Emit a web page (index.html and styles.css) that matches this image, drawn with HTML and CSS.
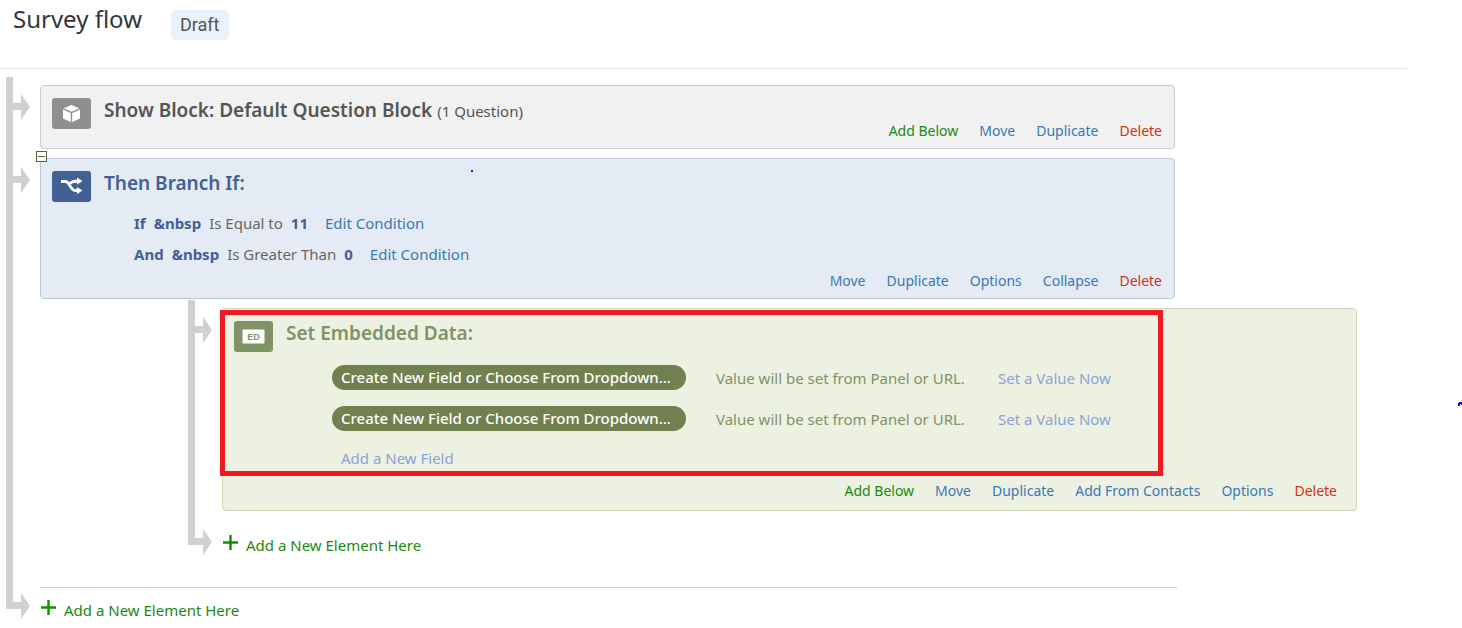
FILE: index.html
```html
<!DOCTYPE html>
<html lang="en">
<head>
<meta charset="utf-8">
<title>Survey flow</title>
<link rel="stylesheet" href="styles.css">
</head>
<body>
<svg class="defs" aria-hidden="true">
  <symbol id="arrow" viewBox="0 0 17 26"><path d="M0 9h8V0l9 13-9 13v-10H0z"/></symbol>
  <symbol id="plus" viewBox="0 0 15 15"><path d="M6.300 0h2.400v6.300H15v2.400H8.700V15H6.300V8.700H0V6.300h6.300z"/></symbol>
</svg>
<header class="page-header">
  <h1 class="page-title">Survey flow</h1>
  <span class="badge">Draft</span>
</header>
<main class="flow">
  <ul class="tree">
    <li class="node">
      <div class="rail"><svg class="arrow"><use href="#arrow"/></svg></div>
      <div class="content">
        <section class="card card-block">
          <svg class="card-icon" viewBox="0 0 39 31">
            <path fill="#fff" d="M19.500 7l7.800 3.200-7.800 3.600-7.800-3.600z M11 11.500l7.800 3.600v9L11 20.500z M28 11.500l-7.800 3.600v9l7.800-3.600z"/>
          </svg>
          <h2 class="card-title">Show Block: Default Question Block <span class="count">(1 Question)</span></h2>
          <nav class="actions">
            <a class="add" href="#">Add Below</a><a href="#">Move</a><a href="#">Duplicate</a><a class="delete" href="#">Delete</a>
          </nav>
        </section>
      </div>
    </li>
    <li class="node">
      <div class="rail"><svg class="arrow"><use href="#arrow"/></svg></div>
      <div class="content">
        <section class="card card-branch">
          <svg class="card-icon" viewBox="0 0 39 31">
            <path fill="none" stroke="#fff" stroke-width="2.800" d="M9 10.500h4.500c4 0 5 9 9.500 9h4M18 12.500c1.500-2 3-2.500 9-2.500"/>
            <path fill="#fff" d="M25 6.500l5.500 3.500-5.500 3.500zM25 16l5.500 3.500-5.500 3.500z"/>
          </svg>
          <h2 class="card-title">Then Branch If:</h2>
          <div class="conditions">
            <p class="condition"><b>If</b><b>&amp;nbsp</b><span>Is Equal to</span><b>11</b><a href="#">Edit Condition</a></p>
            <p class="condition"><b>And</b><b>&amp;nbsp</b><span>Is Greater Than</span><b>0</b><a href="#">Edit Condition</a></p>
          </div>
          <nav class="actions">
            <a href="#">Move</a><a href="#">Duplicate</a><a href="#">Options</a><a href="#">Collapse</a><a class="delete" href="#">Delete</a>
          </nav>
          <i class="speck"></i>
          <button class="toggle" type="button" aria-label="Collapse branch"></button>
        </section>
        <ul class="tree tree-nested">
          <li class="node">
            <div class="rail"><svg class="arrow"><use href="#arrow"/></svg></div>
            <div class="content">
              <section class="card card-data">
                <svg class="card-icon" viewBox="0 0 39 31">
                  <rect x="8.500" y="8.500" width="22" height="14" rx="1" fill="#fff"/>
                  <text class="icon-text" x="19.500" y="19" text-anchor="middle">ED</text>
                </svg>
                <h2 class="card-title">Set Embedded Data:</h2>
                <div class="fields">
                  <div class="field"><button class="pill" type="button">Create New Field or Choose From Dropdown...</button><span>Value will be set from Panel or URL.</span><a href="#">Set a Value Now</a></div>
                  <div class="field"><button class="pill" type="button">Create New Field or Choose From Dropdown...</button><span>Value will be set from Panel or URL.</span><a href="#">Set a Value Now</a></div>
                  <div class="field field-new"><a class="new-field" href="#">Add a New Field</a></div>
                </div>
                <nav class="actions">
                  <a class="add" href="#">Add Below</a><a href="#">Move</a><a href="#">Duplicate</a><a href="#">Add From Contacts</a><a href="#">Options</a><a class="delete" href="#">Delete</a>
                </nav>
                <div class="highlight"></div>
              </section>
            </div>
          </li>
          <li class="node node-last">
            <div class="rail"><svg class="arrow"><use href="#arrow"/></svg></div>
            <div class="content">
              <a class="new-element" href="#"><svg class="plus"><use href="#plus"/></svg>Add a New Element Here</a>
            </div>
          </li>
        </ul>
      </div>
    </li>
    <li class="node node-last node-root">
      <div class="rail"><svg class="arrow"><use href="#arrow"/></svg></div>
      <div class="content">
        <a class="new-element" href="#"><svg class="plus"><use href="#plus"/></svg>Add a New Element Here</a>
      </div>
    </li>
  </ul>
</main>
<svg class="edge-mark" viewBox="0 0 4 4"><path fill="#00f" d="M0 1h1V0h3v3H3V2H2v2H0z"/></svg>
</body>
</html>
```
FILE: styles.css
```css
* { box-sizing: border-box; }
body {
  margin: 0;
  position: relative;
  background: #fff;
  color: #555;
  font: 15px/18px "Noto Sans", "Open Sans", sans-serif;
}
h1, h2, p, ul { margin: 0; padding: 0; }
ul { list-style: none; }
a { color: #3a78b8; text-decoration: none; }
.defs { position: absolute; width: 0; height: 0; }

.page-header {
  display: flex;
  align-items: flex-start;
  gap: 29px;
  height: 69px;
  margin-right: 55px;
  padding: 10px 0 0 13px;
  border-bottom: 1px solid #e2e2e2;
}
.page-title { color: #32363a; font-size: 24px; font-weight: 400; line-height: 18px; }
.badge {
  padding: 0 9px;
  border-radius: 5px;
  background: #eaf3fb;
  color: #555;
  font: 18px/30px Roboto, sans-serif;
}

.flow { padding: 8px 0 0 6px; }
.node { display: flex; }
.rail {
  flex: none;
  width: 34px;
  padding: 17px 0 0 7px;
  background: linear-gradient(#d0d0d0, #d0d0d0) 0 0 / 7px 100% no-repeat;
}
.arrow { display: block; width: 17px; height: 26px; fill: #d0d0d0; }
.node-last > .rail { background-size: 7px 33px; }
.content { flex: 1; min-width: 0; padding: 8px 0 1px; }
.tree-nested { margin: 1px 0 0 148px; padding-bottom: 5px; }

.card {
  position: relative;
  display: grid;
  grid-template-columns: 39px 1fr;
  column-gap: 13px;
  max-width: 1135px;
  padding: 12px 12px 9px 11px;
  border: 1px solid;
  border-radius: 4px;
}
.card-block { background: #f1f1f1; border-color: #c9c9c9; }
.card-branch { background: #e5ebf5; border-color: #bdc8dc; color: #666; }
.card-data { padding: 12px 19px 11px 11px; background: #edf1e1; border-color: #cdd6b5; color: #809365; }
.card-icon { grid-row: 1 / span 3; width: 39px; height: 31px; border-radius: 3px; }
.card-block .card-icon { background: #8f8f8f; }
.card-branch .card-icon { background: #426094; }
.card-data .card-icon { background: #809365; }
.icon-text { fill: #809365; font: bold 9px "Liberation Sans", sans-serif; }
.card-title { grid-column: 2; font: 600 19px/25px "Noto Sans", sans-serif; }
.card-branch .card-title, .condition b { color: #426094; }
.count { font-size: 15px; font-weight: 400; line-height: 18px; }
.actions {
  grid-column: 2;
  display: flex;
  flex-wrap: wrap;
  justify-content: flex-end;
  gap: 21px;
  font-size: 14px;
  line-height: 16px;
}
.add, .new-element { color: #1b8a0b; }
.delete { color: #d62f12; }

.conditions { grid-column: 2; padding: 12px 0 3px 30px; }
.condition { display: flex; gap: 8px; line-height: 31px; }
.condition a { margin-left: 9px; }
.fields { grid-column: 2; padding: 11px 0 6px 46px; }
.field {
  display: grid;
  grid-template-columns: 354px 252px auto;
  justify-content: start;
  align-items: center;
  column-gap: 30px;
  height: 41px;
}
.field-new { height: 38px; }
.field a { color: #8ba2dc; }
.pill {
  height: 25px;
  padding: 0 9px;
  border: 0;
  border-radius: 13px;
  background: #71804f;
  color: #fff;
  font: 500 15px/25px "Noto Sans", sans-serif;
  text-align: left;
  white-space: nowrap;
}
.new-field { padding-left: 9px; }
.highlight {
  position: absolute;
  top: 1px;
  left: -3px;
  right: 193px;
  height: 166px;
  border: 5px solid #ee1b24;
  pointer-events: none;
}
.toggle {
  position: absolute;
  top: -8px;
  left: -5px;
  width: 11px;
  height: 11px;
  padding: 0;
  border: 1px solid #56663d;
  background: linear-gradient(#56663d, #56663d) center / 7px 1px no-repeat #fff;
}
.speck { position: absolute; top: 11px; left: 430px; width: 2px; height: 2px; background: #22f; }
.edge-mark { position: absolute; top: 402px; right: 0; width: 4px; height: 4px; }

.new-element { display: flex; gap: 8px; padding: 15px 0 14px 1px; line-height: 20px; }
.plus { width: 15px; height: 15px; fill: currentColor; }
.node-root > .content { padding-top: 11px; }
.node-root .new-element { max-width: 1137px; padding: 12px 0 0 1px; border-top: 1px solid #ccc; }
```
